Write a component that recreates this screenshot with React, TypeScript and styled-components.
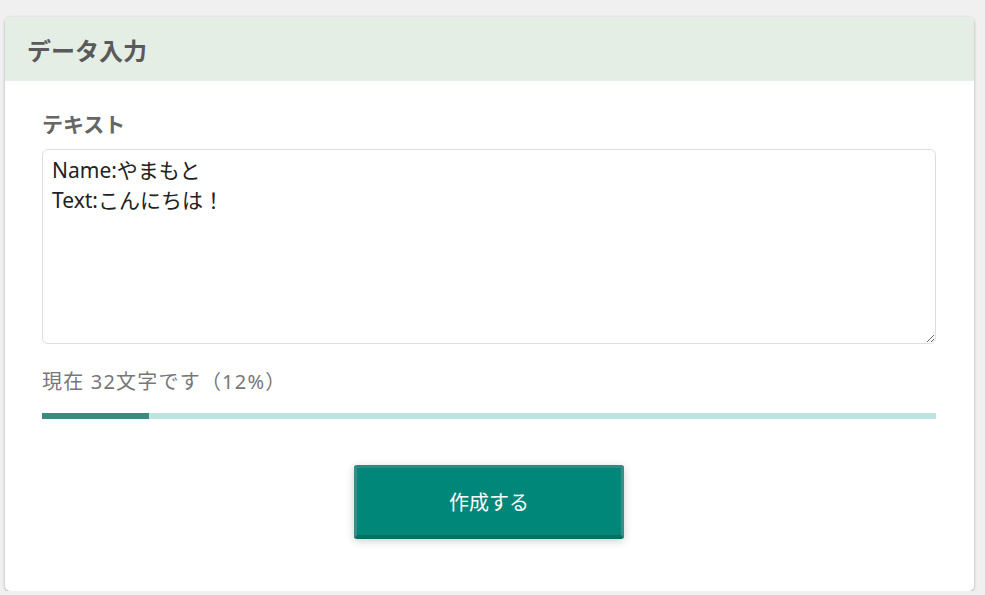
import React, { useState } from 'react';
import styled, { createGlobalStyle } from 'styled-components';

const MAX_LENGTH = 260;

function App() {
    const [text, setText] = useState<string>('Name:やまもと\nText:こんにちは！');
    const count = 32;
    const percent = Math.round((count / MAX_LENGTH) * 100);

    return (
        <>
            <GlobalStyle />
            <Page>
                <Card>
                    <CardHeader>データ入力</CardHeader>
                    <CardBody>
                        <Label htmlFor="text">テキスト</Label>
                        <TextArea id="text" value={text} onChange={(e) => setText(e.target.value)} />
                        <Counter>
                            現在 {count}文字です（{percent}%）
                        </Counter>
                        <ProgressTrack>
                            <ProgressFill style={{ width: `${percent}%` }} />
                        </ProgressTrack>
                        <ButtonRow>
                            <SubmitButton type="button">作成する</SubmitButton>
                        </ButtonRow>
                    </CardBody>
                </Card>
            </Page>
        </>
    );
}

export default App;

const GlobalStyle = createGlobalStyle`
    html, body {
        margin: 0;
        background: #f0f0f0;
        font-family: 'Noto Sans', 'Noto Sans CJK JP', sans-serif;
    }
`;

const Page = styled.div`
    padding: 17px 11px 0 5px;
`;

const Card = styled.div`
    background: #ffffff;
    border-radius: 5px;
    box-shadow: 0 1px 3px rgba(0, 0, 0, 0.3);
    overflow: hidden;
`;

const CardHeader = styled.h2`
    margin: 0;
    height: 64px;
    display: flex;
    align-items: center;
    padding: 0 22px;
    background: #e5eee5;
    color: #5a5a5a;
    font-size: 24px;
    font-weight: bold;
`;

const CardBody = styled.div`
    padding: 28px 38px 52px 37px;
    display: flex;
    flex-direction: column;
`;

const Label = styled.label`
    color: #666666;
    font-size: 21px;
    font-weight: bold;
    line-height: 30px;
    margin-bottom: 10px;
`;

const TextArea = styled.textarea`
    height: 195px;
    box-sizing: border-box;
    border: 1px solid #dddddd;
    border-radius: 6px;
    padding: 5px 9px;
    font-family: inherit;
    font-size: 21px;
    line-height: 30px;
    color: #222222;
    resize: vertical;
    outline: none;
`;

const Counter = styled.div`
    margin-top: 23px;
    color: #777777;
    font-size: 20px;
    letter-spacing: 1.2px;
    line-height: 30px;
`;

const ProgressTrack = styled.div`
    margin-top: 16px;
    height: 6px;
    background: #bde5df;
`;

const ProgressFill = styled.div`
    height: 100%;
    background: #3a8a80;
`;

const ButtonRow = styled.div`
    display: flex;
    justify-content: center;
    margin-top: 46px;
`;

const SubmitButton = styled.button`
    width: 270px;
    height: 74px;
    border: none;
    border-left: 3px solid #3a8d83;
    border-right: 3px solid #3a8d83;
    border-top: 3px solid #2f8a7f;
    border-bottom: 4px solid #066e62;
    border-radius: 3px;
    background: #00877a;
    color: #ffffff;
    font-family: inherit;
    font-size: 20px;
    box-shadow: 0 2px 8px rgba(0, 0, 0, 0.2);
    cursor: pointer;
`;
